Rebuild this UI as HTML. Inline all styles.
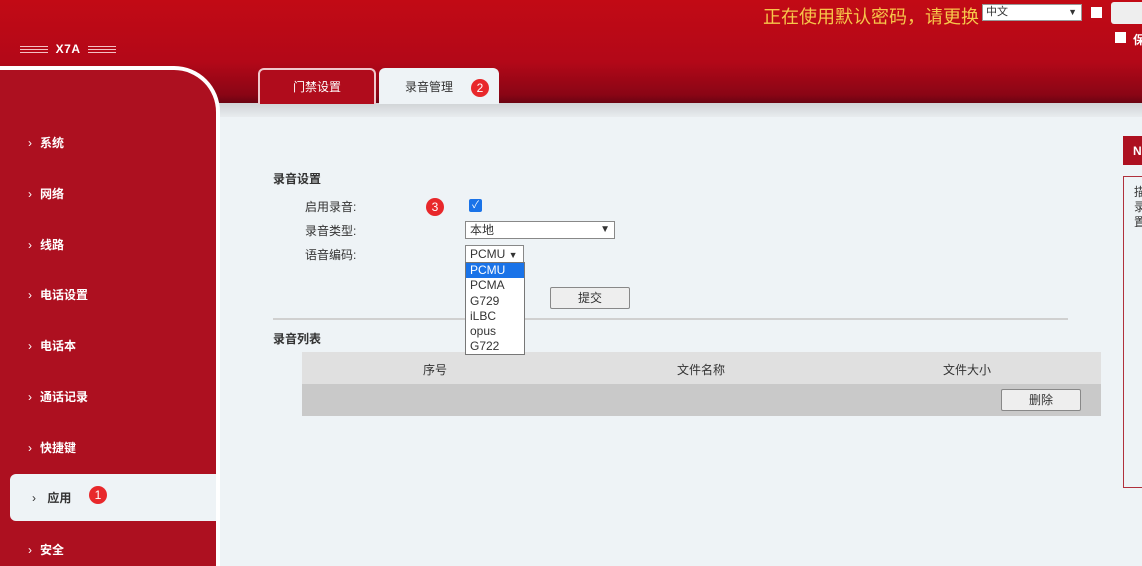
<!DOCTYPE html>
<html><head><meta charset="utf-8"><style>
*{margin:0;padding:0;box-sizing:border-box}
body{width:1142px;height:563px;overflow:hidden;position:relative;background:#eef3f6;font-family:"Liberation Sans","Noto Sans CJK SC",sans-serif;font-size:12px;color:#333}
.hdr{position:absolute;left:0;top:0;width:1142px;height:103px;background:linear-gradient(#c20a15 0%,#b30818 60%,#8a0515 92%,#6a0412 100%)}
.band{position:absolute;left:0;top:103px;width:1142px;height:14px;background:linear-gradient(#d0d3d6,#e8ecef)}
.logo{position:absolute;left:20px;top:42px;color:#fff;font-weight:bold;font-size:12px;letter-spacing:0.5px}
.lines{display:inline-block;width:28px;height:8px;vertical-align:middle;background:repeating-linear-gradient(#f4c0c4 0 1px,transparent 1px 3px)}
.side{position:absolute;left:0;top:66px;width:220px;height:500px;background:#ad1020;border-top:4px solid #fff;border-right:4px solid #fff;border-top-right-radius:46px}
.nav{position:absolute;left:28px;color:#fff;font-weight:bold;font-size:12px}
.nav:before{content:"›";margin-right:8px;font-weight:normal}
.act{position:absolute;left:10px;top:474px;width:206px;height:47px;background:#eef3f6;border-radius:6px 0 0 6px}
.badge{position:absolute;width:18px;height:18px;border-radius:9px;background:#e8282b;color:#fff;font-size:12px;text-align:center;line-height:18px}
.tab{position:absolute;top:68px;height:36px;border:2px solid #f0c8cc;border-bottom:none;border-radius:6px 6px 0 0;text-align:center;line-height:34px;font-size:12px}
.lbl{position:absolute;left:305px;font-size:12px}
.red-panel{position:absolute;left:1123px;top:136px;width:30px;height:29px;background:#ad1020;color:#fff;font-weight:bold;padding:8px 10px;font-size:12px}
.rbox{position:absolute;left:1123px;top:176px;width:30px;height:312px;border:1px solid #b0303c;padding:8px 10px;font-size:12px;line-height:15px}
</style></head><body>
<div class="hdr"></div>
<div class="band"></div>
<div class="logo"><span class="lines"></span>&nbsp;&nbsp;X7A&nbsp;&nbsp;<span class="lines"></span></div>
<div style="position:absolute;left:763px;top:3px;color:#f7c64a;font-size:18px">正在使用默认密码，请更换</div>
<div style="position:absolute;left:982px;top:4px;width:100px;height:17px;background:#fff;border:1px solid #999;font-size:11px;padding-left:3px;line-height:15px">中文<span style="position:absolute;right:4px;top:0;font-size:9px">▼</span></div>
<div style="position:absolute;left:1091px;top:7px;width:11px;height:11px;background:#fff"></div>
<div style="position:absolute;left:1111px;top:2px;width:40px;height:22px;background:#eee;border-radius:3px"></div>
<div style="position:absolute;left:1115px;top:32px;width:11px;height:11px;background:#fff"></div>
<div style="position:absolute;left:1133px;top:31px;color:#fff;font-weight:bold;font-size:12px">保</div>
<div class="side"></div>
<div class="nav" style="top:134px">系统</div>
<div class="nav" style="top:185px">网络</div>
<div class="nav" style="top:236px">线路</div>
<div class="nav" style="top:286px">电话设置</div>
<div class="nav" style="top:337px">电话本</div>
<div class="nav" style="top:388px">通话记录</div>
<div class="nav" style="top:439px">快捷键</div>
<div class="act"></div>
<div class="nav" style="top:489px;left:32px;color:#333">&nbsp;应用</div>
<div class="badge" style="left:89px;top:486px">1</div>
<div class="nav" style="top:541px">安全</div>
<div class="tab" style="left:258px;width:118px;background:#b00c1c;color:#fff">门禁设置</div>
<div class="tab" style="left:379px;width:120px;background:#eef3f6;color:#333;border-color:#eef3f6;padding-right:20px">录音管理</div>
<div class="badge" style="left:471px;top:79px">2</div>
<div style="position:absolute;left:273px;top:170px;font-weight:bold">录音设置</div>
<div class="lbl" style="top:198px">启用录音:</div>
<div class="lbl" style="top:222px">录音类型:</div>
<div class="lbl" style="top:246px">语音编码:</div>
<div class="badge" style="left:426px;top:198px">3</div>
<div style="position:absolute;left:469px;top:199px;width:13px;height:13px;background:#1a73e8;border-radius:2px;color:#fff;font-size:10px;line-height:13px;text-align:center">✓</div>
<div style="position:absolute;left:465px;top:221px;width:150px;height:18px;background:#fff;border:1px solid #888;padding-left:4px;line-height:16px">本地<span style="position:absolute;right:4px;font-size:10px">▼</span></div>
<div style="position:absolute;left:465px;top:245px;width:59px;height:18px;background:#fff;border:1px solid #888;padding-left:4px;line-height:16px">PCMU <span style="font-size:9px">▼</span></div>
<div style="position:absolute;left:550px;top:287px;width:80px;height:22px;background:#eee;border:1px solid #888;border-radius:2px;text-align:center;line-height:20px">提交</div>
<div style="position:absolute;left:273px;top:318px;width:795px;height:2px;background:#d0d0d0"></div>
<div style="position:absolute;left:273px;top:330px;font-weight:bold">录音列表</div>
<div style="position:absolute;left:302px;top:352px;width:799px;height:32px;background:#e0e0e0"></div>
<div style="position:absolute;left:302px;top:384px;width:799px;height:32px;background:#c9c9c9"></div>
<div style="position:absolute;left:423px;top:361px">序号</div>
<div style="position:absolute;left:677px;top:361px">文件名称</div>
<div style="position:absolute;left:943px;top:361px">文件大小</div>
<div style="position:absolute;left:1001px;top:389px;width:80px;height:22px;background:#eee;border:1px solid #888;border-radius:2px;text-align:center;line-height:20px">删除</div>
<div style="position:absolute;z-index:5;left:465px;top:262px;width:60px;height:93px;background:#fff;border:1px solid #777;line-height:15.3px;font-size:12px">
<div style="background:#1a73e8;color:#fff;padding-left:4px">PCMU</div><div style="padding-left:4px">PCMA</div><div style="padding-left:4px">G729</div><div style="padding-left:4px">iLBC</div><div style="padding-left:4px">opus</div><div style="padding-left:4px">G722</div></div>
<div class="red-panel">N</div>
<div class="rbox">描<br>录<br>置</div>
</body></html>
